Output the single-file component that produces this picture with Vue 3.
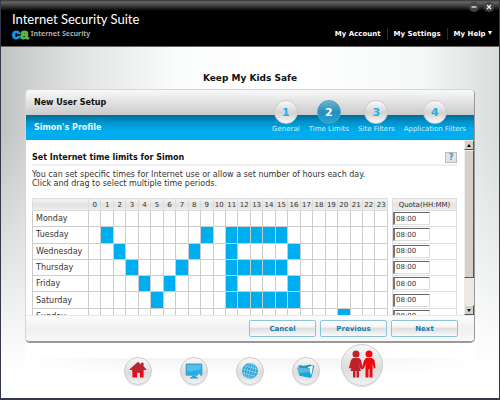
<template>
  <div class="window">
    <header class="top">
      <div class="window-buttons">
        <button aria-label="Minimize">
          <svg viewBox="0 0 10 10"><path d="M2.500 5h5" /></svg>
        </button>
        <button aria-label="Close">
          <svg viewBox="0 0 10 10"><path d="M3 3l4 4M7 3l-4 4" /></svg>
        </button>
      </div>
      <div class="brand">
        <h1>Internet Security Suite</h1>
        <div class="product">
          <span class="logo">c<b>a</b></span>
          <span>Internet Security</span>
        </div>
      </div>
      <nav class="menu">
        <a href="#">My Account</a>
        <a href="#">My Settings</a>
        <a href="#">My Help <i class="caret"></i></a>
      </nav>
    </header>

    <main class="content">
      <h2 class="page-title">Keep My Kids Safe</h2>

      <section class="panel">
        <div class="panel-head">
          <h3>New User Setup</h3>
          <h4>Simon's Profile</h4>
          <ol class="steps">
            <li v-for="(step, index) in steps" :key="step" :class="{ active: index === 1 }">
              <span class="circle">{{ index + 1 }}</span>
              <span class="step-label">{{ step }}</span>
            </li>
          </ol>
        </div>

        <div class="panel-body">
          <div class="scroll-content">
            <div class="section-title">
              <h5>Set Internet time limits for Simon</h5>
              <button class="help">?</button>
            </div>
            <p>
              You can set specific times for Internet use or allow a set number of hours each day.<br />
              Click and drag to select multiple time periods.
            </p>

            <div class="tables">
              <div class="hours-wrap">
                <table class="hours">
                  <thead>
                    <tr>
                      <th class="day"></th>
                      <th v-for="hour in 24" :key="hour">{{ hour - 1 }}</th>
                    </tr>
                  </thead>
                  <tbody>
                    <tr v-for="day in days" :key="day.name">
                      <td class="day">{{ day.name }}</td>
                      <td
                        v-for="hour in 24"
                        :key="hour"
                        :class="{ on: day.hours.includes(hour - 1) }"
                        @mousedown.prevent="toggle(day, hour - 1)"
                        @mouseenter="drag($event, day, hour - 1)"
                      ></td>
                    </tr>
                  </tbody>
                </table>
              </div>

              <table class="quota">
                <thead>
                  <tr>
                    <th>Quota(HH:MM)</th>
                  </tr>
                </thead>
                <tbody>
                  <tr v-for="day in days" :key="day.name">
                    <td><input v-model="day.quota" type="text" :aria-label="day.name + ' quota'" /></td>
                  </tr>
                </tbody>
              </table>
            </div>
          </div>

          <div class="scrollbar">
            <button aria-label="Scroll up"><i class="up"></i></button>
            <div class="thumb"></div>
            <div class="track"></div>
            <button aria-label="Scroll down"><i class="down"></i></button>
          </div>
        </div>

        <div class="panel-foot">
          <button>Cancel</button>
          <button>Previous</button>
          <button>Next</button>
        </div>
      </section>

      <nav class="dock">
        <a href="#" aria-label="Home">
          <svg viewBox="0 0 28 28">
            <path fill="#e8091a" d="M8 11h12v10h-4v-5h-3v5H8z" />
            <path fill="#b92632" d="M14 4l3 3V5h3v4l3 3v1h-3c-3 2-7 2.500-12 2v-2H5v-1z" />
          </svg>
        </a>
        <a href="#" aria-label="Computer">
          <svg viewBox="0 0 28 28">
            <rect x="5" y="6" width="18" height="13" rx="1" fill="#3fa5cf" />
            <rect x="6.500" y="7.500" width="15" height="10" fill="#1cb2ee" />
            <path fill="#55bfe9" d="M6.500 7.500h15v4c-4 2.500-9 3-15 2.500z" />
            <path fill="#1aa5dd" d="M12 19h4v1.500h2V22h-8v-1.500h2z" />
            <path fill="#fff" d="M19 17l1 1 1-.5-.5 1.500-1.500.5-1-1z" />
          </svg>
        </a>
        <a href="#" aria-label="Web">
          <svg viewBox="0 0 28 28">
            <circle cx="14" cy="14" r="8.500" fill="#1f9fd2" />
            <g fill="none" stroke="#a5dcf2" stroke-width=".7" transform="rotate(15 14 14)">
              <path d="M5.500 14h17M6.500 10h15M6.500 18h15M14 5.500v17" />
              <ellipse cx="14" cy="14" rx="3" ry="8.500" />
              <ellipse cx="14" cy="14" rx="6" ry="8.500" />
            </g>
          </svg>
        </a>
        <a href="#" aria-label="Files">
          <svg viewBox="0 0 28 28">
            <path fill="#2c93bf" d="M5 8.500l4-1 1.500 1L19 7l1 1 3 0-3 12.500-2 .5z" />
            <path fill="#fff" d="M16 10l4-1.500 1.500.5-2 10z" />
            <path fill="#12a7e3" d="M4.500 10.500l13.500.5 1 10.500L7 19z" />
            <path fill="#5ab7dc" d="M4.500 10.500l13.500.5.3 3.500c-4 1.500-8 1.500-12.500 1z" />
          </svg>
        </a>
        <a href="#" class="big" aria-label="Family">
          <svg viewBox="0 0 40 40">
            <g fill="#c0202a">
              <circle cx="14" cy="9" r="3.500" />
              <path d="M11 13h6l2 2 1.500 7 1 1-1.500 1.500-1.500-1-2-5 2.500 7.500h-2v6.500h-2.500V26h-1v6.500H11V26H8.500l2-7-1 4-2 .5-.5-1L9 15z" />
            </g>
            <g fill="#ee0a0e">
              <circle cx="27" cy="9" r="3.500" />
              <path d="M24 13h6l2.500 2 1 8-1.500.5-1.500-4.500v13.500H27.500V24h-1v8.500H23.500V19l-1.500 4.500-1.500.5-.5-1.500 2-7z" />
            </g>
          </svg>
        </a>
      </nav>
    </main>
  </div>
</template>

<script setup>
import { ref } from "vue";

const steps = ["General", "Time Limits", "Site Filters", "Application Filters"];

const days = ref([
  { name: "Monday", hours: [], quota: "08:00" },
  { name: "Tuesday", hours: [1, 9, 11, 12, 13, 14, 15], quota: "08:00" },
  { name: "Wednesday", hours: [2, 8, 11, 16], quota: "08:00" },
  { name: "Thursday", hours: [3, 7, 11, 12, 13, 14, 15], quota: "08:00" },
  { name: "Friday", hours: [4, 6, 11, 16], quota: "08:00" },
  { name: "Saturday", hours: [5, 11, 12, 13, 14, 15, 16], quota: "08:00" },
  { name: "Sunday", hours: [20], quota: "08:00" },
]);

const toggle = (day, hour) => {
  if (day.hours.includes(hour)) {
    day.hours = day.hours.filter(h => h !== hour);
  } else {
    day.hours.push(hour);
  }
};

const drag = (event, day, hour) => {
  if (event.buttons === 1) toggle(day, hour);
};
</script>

<style>
body {
  margin: 0;
}
</style>

<style scoped>
* {
  box-sizing: border-box;
}

.window {
  display: flex;
  flex-direction: column;
  min-height: 100vh;
  border: 1px solid #34394a;
  border-bottom-width: 2px;
  border-top: none;
  font-family: "DejaVu Sans", Verdana, sans-serif;
  font-size: 8px;
  color: #333;
}

h1, h2, h3, h4, h5, p, ol {
  margin: 0;
  padding: 0;
}

button {
  padding: 0;
  font-family: inherit;
  cursor: pointer;
}

a {
  text-decoration: none;
}

.top {
  display: grid;
  grid-template-columns: 1fr auto;
  grid-template-rows: 12px 1fr;
  height: 47px;
  padding: 0 5px 0 11px;
  border-bottom: 1px solid #666;
  background: linear-gradient(#333 0, #666 2px, #3a3a3a 6px, #000 11px);
}

.window-buttons {
  grid-column: 1 / 3;
  display: flex;
  justify-content: flex-end;
  gap: 5px;
  padding-top: 2px;
}

.window-buttons button {
  width: 10px;
  height: 10px;
  border: none;
  border-radius: 50%;
  background: #444;
}

.window-buttons svg {
  display: block;
  fill: none;
  stroke: #eee;
  stroke-width: 1.3;
}

.brand h1 {
  font: 13px/14px Lato, sans-serif;
  color: #fff;
}

.product {
  display: flex;
  align-items: center;
  gap: 2px;
  height: 16px;
  font: bold 7px/10px "Noto Sans", sans-serif;
  color: #aaa;
}

.logo {
  font: bold 15px/12px "Liberation Sans", Arial, sans-serif;
  color: #1494dc;
  -webkit-text-stroke: 1px;
}

.logo b {
  color: #5cb947;
}

.menu {
  display: flex;
  align-items: center;
  height: 12px;
  margin-top: 16px;
  font-size: 7px;
}

.menu a {
  padding: 0 6px;
  border-left: 1px solid #2c2c2c;
  font-weight: bold;
  line-height: 12px;
  color: #fff;
}

.menu a:first-child {
  border-left: none;
}

.menu a:last-child {
  padding-right: 2px;
}

.caret {
  display: inline-block;
  vertical-align: 1px;
  border: 2px solid transparent;
  border-top: 4px solid #fff;
  border-bottom: none;
}

.content {
  flex: 1;
  padding: 0 24px;
  background:
    linear-gradient(transparent 25%, #fff 92%),
    linear-gradient(90deg, #c2c4c4, #e2e4e3 16%, #fbfdfc 36%, #fff 60%, #f5f9f8 84%, #d8dcdb);
}

.page-title {
  height: 42px;
  padding-top: 24px;
  text-align: center;
  font-size: 9px;
  line-height: 14px;
  color: #111;
}

.panel {
  overflow: hidden;
  border: 1px solid #d5d5d5;
  border-right-color: #999;
  border-bottom: 2px solid #999;
  border-radius: 5px;
  background: #fff;
}

.panel-head {
  display: grid;
  grid-template-columns: 1fr auto;
  grid-template-rows: 25px 25px;
  align-items: center;
  padding: 0 8px;
  background: linear-gradient(#f9f9f9, #cacaca 25px, #006b96 25px, #0092ca 32px, #00adef 41px);
}

.panel-head h3 {
  font-size: 8px;
  color: #111;
}

.panel-head h4 {
  grid-row: 2;
  font-size: 8px;
  color: #e8f7ff;
}

.steps {
  grid-column: 2;
  grid-row: 1 / 3;
  display: flex;
  gap: 9px;
  padding-top: 4px;
  list-style: none;
}

.steps li {
  display: flex;
  flex-direction: column;
  align-items: center;
}

.circle {
  width: 24px;
  height: 24px;
  border: 1px solid #ccc;
  border-radius: 50%;
  background: linear-gradient(#fafafa, #d2d2d2 55%, #f8f8f8);
  text-align: center;
  font-size: 11px;
  font-weight: bold;
  line-height: 24px;
  color: #22afe5;
}

.active .circle {
  border-color: #4fa3c3;
  background: linear-gradient(#6fb3cd, #2390bb 50%, #26a5d6);
  color: #fff;
}

.step-label {
  font-size: 7px;
  line-height: 11px;
  color: #c9effc;
}

.panel-body {
  display: flex;
  height: 175px;
}

.scroll-content {
  flex: 1;
  overflow: hidden;
  padding: 11px 7px 0 6px;
}

.section-title {
  display: flex;
  align-items: center;
  justify-content: space-between;
  height: 15px;
  border-bottom: 2px solid #f0f0f0;
}

.section-title h5 {
  font-size: 8px;
  color: #111;
}

.help {
  width: 12px;
  height: 11px;
  border: 1px solid #bbb;
  background: #e4e4e4;
  font-size: 8px;
  font-weight: bold;
  line-height: 9px;
  color: #1a9bd0;
}

p {
  padding: 4px 0 10px;
  line-height: 9px;
}

.tables {
  display: flex;
  gap: 4px;
}

table {
  width: 100%;
  height: 127px;
  border-collapse: collapse;
  table-layout: fixed;
}

.hours-wrap {
  flex: 1;
}

.quota {
  width: 65px;
}

th,
td {
  padding: 0;
  border: 1px solid #ccc;
}

th {
  height: 12px;
  background: linear-gradient(#f4f4f4, #e2e2e2 50%, #f0f0f0);
  border-color: #ddd;
  font-size: 7px;
  font-weight: normal;
  line-height: 10px;
}

.day {
  width: 56px;
  padding-left: 3px;
}

td.on {
  background: #00adef;
}

.quota td {
  border-color: #ddd;
}

.quota input {
  display: block;
  width: 37px;
  height: 13px;
  padding: 0 1px;
  border: 1px solid #ddd;
  border-top-color: #666;
  border-left: 2px solid #777;
  background: #fff;
  font: 7px "DejaVu Sans", sans-serif;
  color: #333;
}

.scrollbar {
  display: flex;
  flex-direction: column;
  width: 10px;
  background: #ece9e4;
}

.scrollbar button {
  display: flex;
  align-items: center;
  justify-content: center;
  height: 10px;
  border: 1px solid #eee;
  border-right-color: #555;
  border-bottom-color: #555;
  background: #d4d0c8;
}

.up,
.down {
  border: 2px solid transparent;
  border-top: none;
  border-bottom: 3px solid #000;
}

.down {
  border-top: 3px solid #000;
  border-bottom: none;
}

.thumb {
  flex: 128;
  border: 1px solid #eee;
  border-right-color: #555;
  border-bottom-color: #555;
  background: #d4d0c8;
}

.track {
  flex: 27;
}

.panel-foot {
  display: flex;
  justify-content: flex-end;
  gap: 4px;
  padding: 4px 16px;
  border-top: 1px solid #e8e8e8;
  background: linear-gradient(#fcfcfc, #f0f0f0 50%, #f8f8f8);
}

.panel-foot button {
  width: 67px;
  height: 17px;
  border: 1px solid #8cc3d8;
  border-radius: 2px;
  background: linear-gradient(#fff, #f4f4f4 40%, #dedede 50%, #fafafa);
  font-size: 7px;
  font-weight: bold;
  color: #0f7fae;
}

.dock {
  display: flex;
  justify-content: center;
  align-items: flex-end;
  height: 43px;
  background:
    linear-gradient(90deg, #fff, transparent 25% 75%, #fff),
    linear-gradient(#fff 15px, #f4f4f4 15px, #fff 32px);
}

.dock a {
  width: 28px;
  height: 28px;
  margin: 0 14px 1px;
  border: 1px solid #ccc;
  border-radius: 50%;
  background: linear-gradient(#f8f8f8, #dcdcdc 60%, #f2f2f2);
  box-shadow: 0 2px 1px -1px #ddd;
}

.dock .big {
  width: 42px;
  height: 42px;
  margin: 0 7px;
}

.dock svg {
  display: block;
}
</style>
